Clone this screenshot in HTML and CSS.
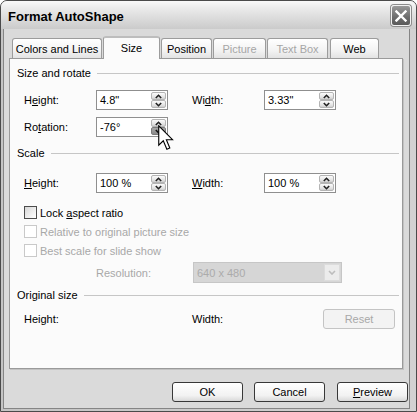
FILE: index.html
```html
<!DOCTYPE html>
<html>
<head>
<meta charset="utf-8">
<title>Format AutoShape</title>
<link rel="stylesheet" href="styles.css">
</head>
<body>
<div class="window">
  <div class="titlebar">
    <span class="title">Format AutoShape</span>
    <span class="close"><svg width="12" height="12" viewBox="0 0 12 12"><path d="M1.5 1.5 L10.5 10.5 M10.5 1.5 L1.5 10.5" stroke="#fff" stroke-width="2.4" stroke-linecap="square"/></svg></span>
  </div>
  <div class="frame">
    <div class="client">
      <div class="tabs">
        <div class="tab t-colors">Colors and Lines</div>
        <div class="tab tab-active t-size">Size</div>
        <div class="tab t-position">Position</div>
        <div class="tab tab-disabled t-picture">Picture</div>
        <div class="tab tab-disabled t-textbox">Text Box</div>
        <div class="tab t-web">Web</div>
      </div>
      <div class="panel">
        <div class="group"><span>Size and rotate</span><i class="rule"></i></div>
        <div class="fields fields-first">
          <span class="lbl">H<u>e</u>ight:</span>
          <div class="spin"><span class="val">4.8"</span><span class="spinbtns"><span class="sb"><svg width="7" height="5" viewBox="0 0 7 5"><path d="M0.8 4 L3.5 1.3 L6.2 4" fill="none" stroke="#222" stroke-width="1.6"/></svg></span><span class="sb"><svg width="7" height="5" viewBox="0 0 7 5"><path d="M0.8 1 L3.5 3.7 L6.2 1" fill="none" stroke="#222" stroke-width="1.6"/></svg></span></span></div>
          <span></span>
          <span class="lbl">Wi<u>d</u>th:</span>
          <div class="spin"><span class="val">3.33"</span><span class="spinbtns"><span class="sb"><svg width="7" height="5" viewBox="0 0 7 5"><path d="M0.8 4 L3.5 1.3 L6.2 4" fill="none" stroke="#222" stroke-width="1.6"/></svg></span><span class="sb"><svg width="7" height="5" viewBox="0 0 7 5"><path d="M0.8 1 L3.5 3.7 L6.2 1" fill="none" stroke="#222" stroke-width="1.6"/></svg></span></span></div>
          <span class="lbl">Ro<u>t</u>ation:</span>
          <div class="spin"><span class="val">-76°</span><span class="spinbtns"><span class="sb"><svg width="7" height="5" viewBox="0 0 7 5"><path d="M0.8 4 L3.5 1.3 L6.2 4" fill="none" stroke="#222" stroke-width="1.6"/></svg></span><span class="sb sb-pressed"><svg width="7" height="5" viewBox="0 0 7 5"><path d="M0.8 1 L3.5 3.7 L6.2 1" fill="none" stroke="#111" stroke-width="1.6"/></svg></span></span></div>
        </div>
        <div class="group group-scale"><span>Scale</span><i class="rule"></i></div>
        <div class="fields fields-scale">
          <span class="lbl"><u>H</u>eight:</span>
          <div class="spin"><span class="val">100 %</span><span class="spinbtns"><span class="sb"><svg width="7" height="5" viewBox="0 0 7 5"><path d="M0.8 4 L3.5 1.3 L6.2 4" fill="none" stroke="#222" stroke-width="1.6"/></svg></span><span class="sb"><svg width="7" height="5" viewBox="0 0 7 5"><path d="M0.8 1 L3.5 3.7 L6.2 1" fill="none" stroke="#222" stroke-width="1.6"/></svg></span></span></div>
          <span></span>
          <span class="lbl"><u>W</u>idth:</span>
          <div class="spin"><span class="val">100 %</span><span class="spinbtns"><span class="sb"><svg width="7" height="5" viewBox="0 0 7 5"><path d="M0.8 4 L3.5 1.3 L6.2 4" fill="none" stroke="#222" stroke-width="1.6"/></svg></span><span class="sb"><svg width="7" height="5" viewBox="0 0 7 5"><path d="M0.8 1 L3.5 3.7 L6.2 1" fill="none" stroke="#222" stroke-width="1.6"/></svg></span></span></div>
        </div>
        <div class="check check-lock"><span class="box"></span><span>Lock <u>a</u>spect ratio</span></div>
        <div class="check check-off"><span class="box"></span><span>Relative to original picture size</span></div>
        <div class="check check-off"><span class="box"></span><span>Best scale for slide show</span></div>
        <div class="res-row">
          <span class="res-lbl">Resolution:</span>
          <div class="select"><span class="sel-val">640 x 480</span><span class="sel-btn"><svg width="8" height="5" viewBox="0 0 8 5"><path d="M1 1 L4 4 L7 1" fill="none" stroke="#bdbdbd" stroke-width="1.6"/></svg></span></div>
        </div>
        <div class="group group-orig"><span>Original size</span><i class="rule"></i></div>
        <div class="orig-row">
          <span class="lbl">Height:</span>
          <span class="lbl">Width:</span>
          <span class="btn btn-disabled">Reset</span>
        </div>
      </div>
      <div class="buttons">
        <span class="btn">OK</span>
        <span class="btn">Cancel</span>
        <span class="btn"><u>P</u>review</span>
      </div>
    </div>
  </div>
  <svg class="cursor" width="16" height="26" viewBox="0 0 13 21"><path d="M0.6 0.6 L0.6 16.4 L4.3 12.8 L7.2 19.6 L9.6 18.6 L6.8 11.9 L11.8 11.9 Z" fill="#fff" stroke="#000" stroke-width="0.9" stroke-linejoin="miter"/></svg>
</div>
</body>
</html>
```

FILE: styles.css
```css
* { box-sizing: border-box; }

html, body {
  margin: 0;
  padding: 0;
  background: #ffffff;
}

body {
  font-family: "Liberation Sans", Arial, sans-serif;
  font-size: 11px;
  color: #000;
}

.window {
  position: relative;
  width: 417px;
  height: 412px;
  border: 1px solid #4a4a4a;
  border-radius: 7px 7px 0 0;
  background: #c9c9c9;
  display: flex;
  flex-direction: column;
  overflow: hidden;
}

.titlebar {
  height: 28px;
  flex: none;
  display: flex;
  align-items: center;
  justify-content: space-between;
  padding: 0 5px 0 7px;
  background: linear-gradient(#f9f9f9 0%, #ebebeb 25%, #dcdcdc 60%, #cbcbcb 100%);
}

.title {
  font-weight: bold;
  font-size: 13px;
  padding-top: 2px;
}

.close {
  width: 20px;
  height: 21px;
  margin-top: 1px;
  border: 1px solid #f2f2f2;
  border-radius: 3px;
  background: linear-gradient(#9a9a9a, #6c6c6c 60%, #5a5a5a);
  box-shadow: 0 0 0 1px #8c8c8c;
  display: flex;
  align-items: center;
  justify-content: center;
}

.frame {
  flex: 1;
  display: flex;
  padding: 0 6px 2px 2px;
  background: linear-gradient(90deg, #c4c4c4, #d2d2d2);
}

.client {
  flex: 1;
  display: flex;
  flex-direction: column;
  border: 1px solid #858585;
  border-top: none;
  background: #dadada;
  padding: 7px 0 0 5px;
}

/* Tabs */
.tabs {
  display: flex;
  align-items: flex-end;
  height: 22px;
  padding-left: 3px;
  position: relative;
  z-index: 2;
}

.tab {
  height: 20px;
  margin-right: 1px;
  border: 1px solid #9c9c9c;
  border-bottom: none;
  border-radius: 3px 3px 0 0;
  background: linear-gradient(#ffffff, #f3f3f3 60%, #e3e3e3);
  display: flex;
  align-items: center;
  justify-content: center;
  padding-top: 1px;
}

.tab-active {
  height: 23px;
  margin-bottom: -1px;
  background: #fbfbfb;
  border-top: 2px solid #bdbdbd;
  padding-bottom: 2px;
}

.tab-disabled { color: #a6a6a6; }

.t-colors { width: 90px; }
.t-size { width: 57px; }
.t-position { width: 51px; }
.t-picture { width: 53px; }
.t-textbox { width: 61px; margin-right: 2px; }
.t-web { width: 49px; }

/* Panel */
.panel {
  width: 394px;
  height: 311px;
  flex: none;
  border: 1px solid #9a9a9a;
  background: #fbfbfb;
  box-shadow: 1px 1px 0 #c2c2c2;
  padding: 7px 3px 0 7px;
  display: flex;
  flex-direction: column;
}

.group {
  height: 14px;
  display: flex;
  align-items: center;
  gap: 6px;
}

.rule {
  flex: 1;
  height: 0;
  border-top: 1px solid #c6c6c6;
}

.group-scale { margin-top: 9px; }
.group-orig { margin-top: 5px; }

.fields {
  display: grid;
  grid-template-columns: 72px 72px 24px 72px 72px;
  grid-auto-rows: 20px;
  row-gap: 7px;
  margin-left: 7px;
  align-items: center;
}

.fields-first { margin-top: 10px; }
.fields-scale { margin-top: 13px; }

.spin {
  height: 20px;
  border: 1px solid #8f8f8f;
  background: #fff;
  display: flex;
  align-items: center;
  justify-content: space-between;
  padding: 0 1px 0 3px;
}

.spinbtns {
  display: flex;
  flex-direction: column;
  width: 15px;
}

.sb {
  height: 8px;
  border: 1px solid #b4b4b4;
  border-radius: 2px;
  background: linear-gradient(#fbfbfb, #e2e2e2 70%, #cdcdcd);
  display: flex;
  align-items: center;
  justify-content: center;
}

.sb-pressed {
  background: linear-gradient(#a8a8a8, #8a8a8a);
  border-color: #7a7a7a;
}

/* Checkboxes */
.check {
  height: 13px;
  display: flex;
  align-items: center;
  gap: 3px;
  margin-left: 7px;
  margin-top: 6px;
}

.check-lock { margin-top: 13px; }

.box {
  width: 13px;
  height: 13px;
  border: 1px solid #4c4c4c;
  background: linear-gradient(135deg, #d6d6d6, #f4f4f4 70%, #fff);
}

.check-off { color: #a8a8a8; }
.check-off .box {
  border-color: #c9c9c9;
  background: #fff;
}

/* Resolution */
.res-row {
  margin-top: 5px;
  height: 21px;
  display: flex;
  align-items: center;
  padding-left: 79px;
}

.res-lbl {
  width: 97px;
  color: #a8a8a8;
}

.select {
  width: 149px;
  height: 21px;
  border: 1px solid #c6c6c6;
  background: #d6d6d6;
  display: flex;
  align-items: center;
  justify-content: space-between;
  padding: 0 1px 0 3px;
}

.sel-val { color: #ababab; }

.sel-btn {
  width: 16px;
  height: 17px;
  border: 1px solid #dcdcdc;
  background: #ececec;
  display: flex;
  align-items: center;
  justify-content: center;
}

/* Original size */
.orig-row {
  margin-top: 7px;
  height: 20px;
  display: grid;
  grid-template-columns: 168px 131px 72px;
  align-items: center;
  margin-left: 7px;
}

/* Buttons */
.btn {
  height: 20px;
  width: 71px;
  border: 1px solid #383838;
  border-radius: 3px;
  background: linear-gradient(#ffffff, #f2f2f2 70%, #d9d9d9);
  display: flex;
  align-items: center;
  justify-content: center;
}

.btn-disabled {
  width: 72px;
  border-color: #c4c4c4;
  background: #f3f3f3;
  color: #a8a8a8;
}

.buttons {
  display: flex;
  justify-content: flex-end;
  margin-top: 13px;
  padding-right: 1px;
  gap: 11px;
}

.buttons .btn:last-child { margin-left: 1px; }

.cursor {
  position: absolute;
  left: 157px;
  top: 124px;
  z-index: 5;
}
```
